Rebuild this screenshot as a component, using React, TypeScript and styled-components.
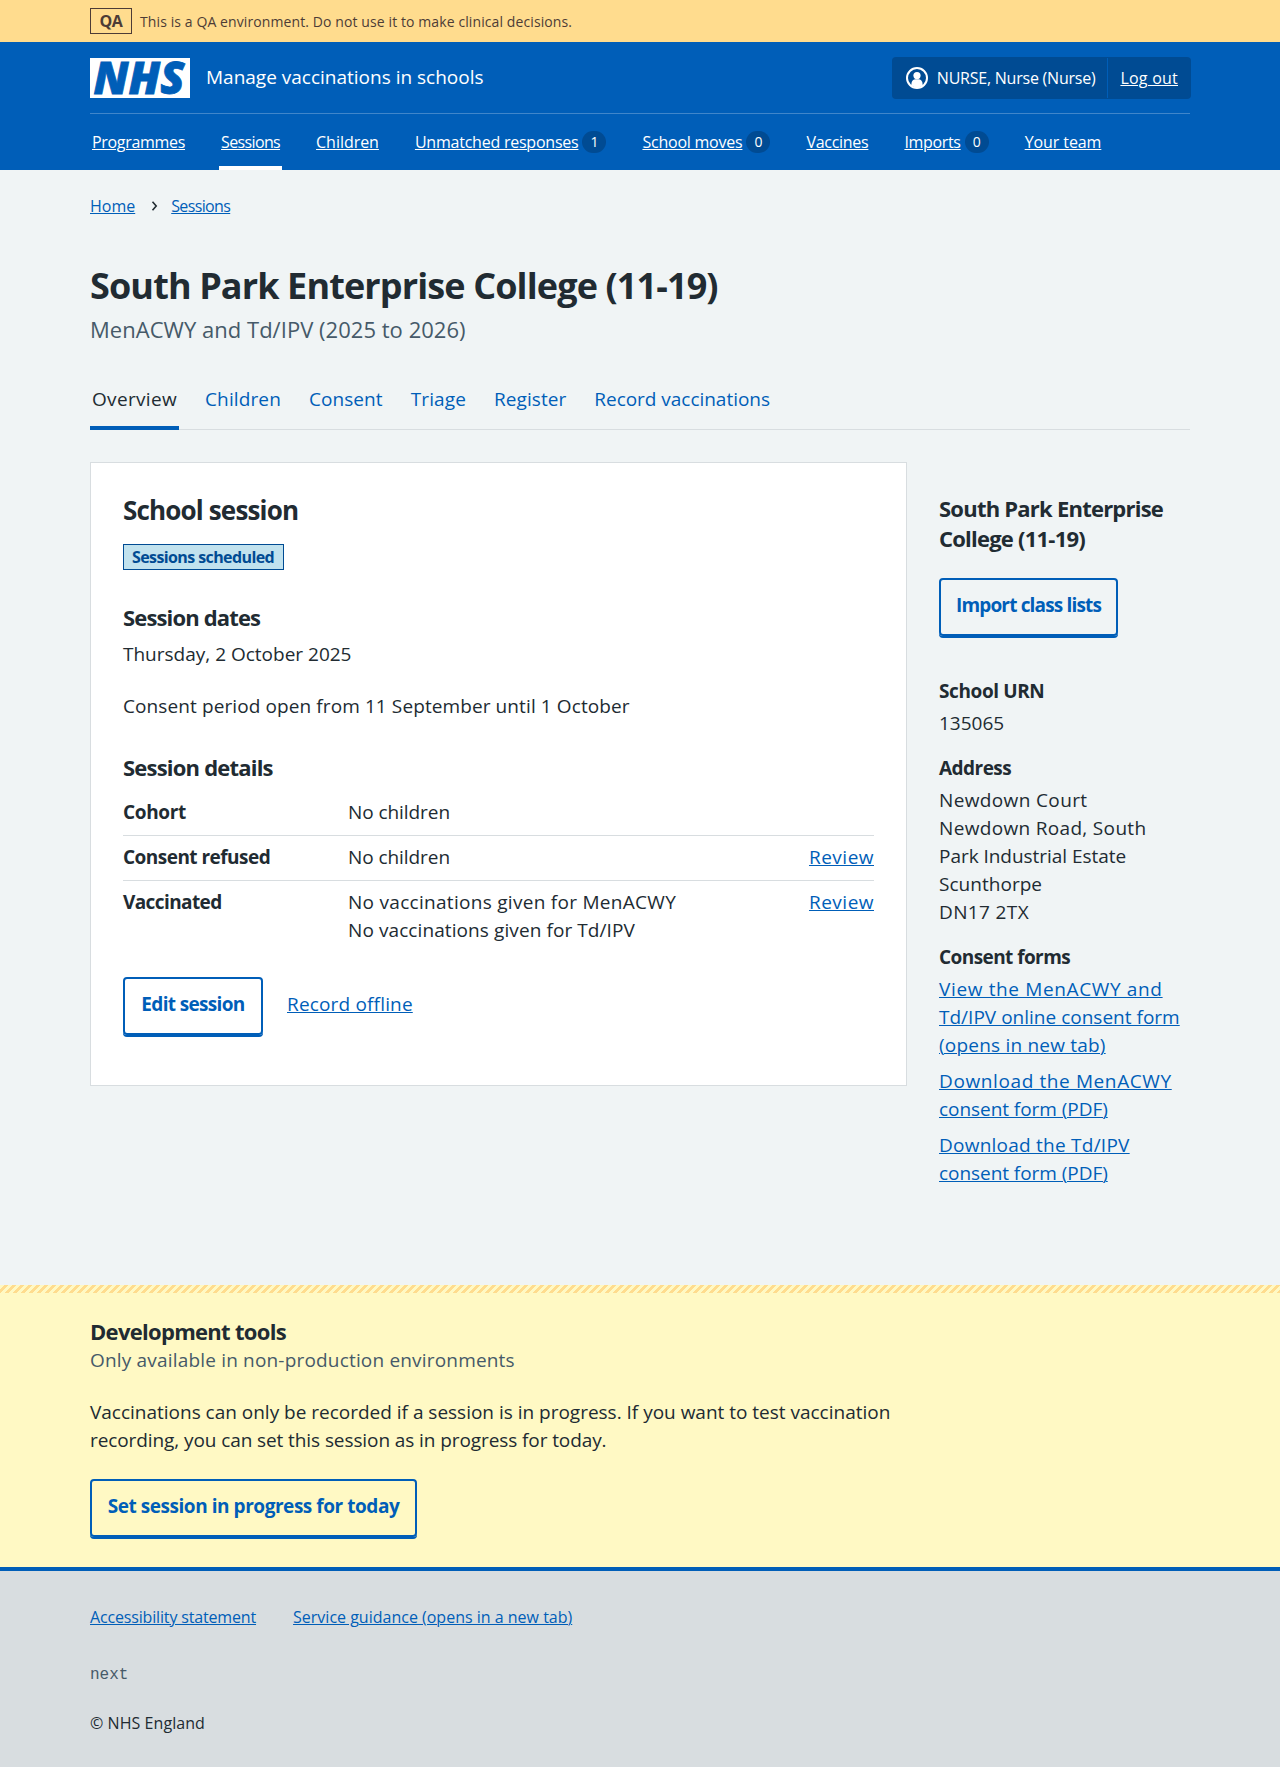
import React from "react";
import styled, { createGlobalStyle, css } from "styled-components";

const blue = "#005eb8";
const darkBlue = "#004b93";
const ink = "#212b32";
const secondary = "#465a69";
const rule = "#d8dde0";

const GlobalStyle = createGlobalStyle`
  *, *::before, *::after { box-sizing: border-box; }
  body {
    margin: 0;
    background: ${rule};
    color: ${ink};
    font-family: "Open Sans", "Noto Sans", sans-serif;
    font-size: 19px;
    line-height: 28px;
  }
  h1, h2, h3, p, ul, dl, dd, dt { margin: 0; padding: 0; }
`;

type Tracked = { $ls?: number };
const tracking = css<Tracked>`
  letter-spacing: ${({ $ls = 0 }) => $ls}px;
`;

const Container = styled.div`
  width: 1100px;
  margin: 0 auto;
`;

const Text = styled.span<Tracked>`
  ${tracking}
  white-space: nowrap;
`;

const Link = styled.a<Tracked>`
  ${tracking}
  color: ${blue};
  white-space: nowrap;
  text-decoration: underline;
  text-decoration-thickness: 1px;
  text-underline-offset: 1px;
`;

/* Environment banner */
const Banner = styled.div`
  background: #ffdc8e;
  color: #4d3c36;
`;
const BannerRow = styled(Container)`
  display: flex;
  align-items: center;
  gap: 8px;
  height: 42px;
`;
const EnvTag = styled.strong`
  display: flex;
  align-items: center;
  justify-content: center;
  width: 42px;
  height: 26px;
  border: 1px solid currentColor;
  font-size: 16px;
  font-weight: 700;
  line-height: 24px;
  letter-spacing: -0.3px;
`;
const BannerText = styled.span`
  font-size: 14px;
  line-height: 21px;
  letter-spacing: 0.1px;
`;

/* Header */
const Header = styled.header`
  background: ${blue};
  color: #fff;
`;
const HeaderMain = styled(Container)`
  display: flex;
  align-items: center;
  height: 72px;
  padding: 15px 0 14px;
  border-bottom: 1px solid rgba(255, 255, 255, 0.25);
`;
const Logo = styled.svg`
  display: block;
  overflow: visible;
  margin-right: 16px;
`;
const ServiceName = styled.span`
  margin-bottom: 2px;
  white-space: nowrap;
`;
const Account = styled.div`
  display: flex;
  height: 42px;
  margin: 0 -1px 0 auto;
  border-radius: 4px;
  background: ${darkBlue};
  font-size: 16px;
  line-height: 24px;
`;
const AccountItem = styled.div<{ $divided?: boolean }>`
  display: flex;
  align-items: center;
  gap: 9px;
  margin: 1px 0;
  padding: ${({ $divided }) => ($divided ? "0 13px 0 12px" : "0 12px 0 14px")};
  border-left: ${({ $divided }) => ($divided ? `1px solid ${blue}` : "0")};
`;
const HeaderLink = styled(Link)`
  color: #fff;
`;
const Nav = styled(Container).attrs({ as: "nav" })`
  display: flex;
  gap: 32px;
  height: 56px;
  font-size: 16px;
  line-height: 24px;
`;
const NavItem = styled.div<{ $active?: boolean }>`
  display: flex;
  align-items: center;
  gap: 4px;
  padding: 0 2px;
  box-shadow: ${({ $active }) => ($active ? "inset 0 -4px 0 #fff" : "none")};
`;
const Count = styled.span`
  display: flex;
  align-items: center;
  justify-content: center;
  width: 24px;
  height: 22px;
  border-radius: 12px;
  background: ${darkBlue};
  font-size: 14px;
  line-height: 22px;
`;

/* Page heading */
const Main = styled.main`
  padding: 24px 0 98px;
  background: #f0f4f5;
`;
const Breadcrumb = styled.nav`
  display: flex;
  align-items: center;
  font-size: 16px;
  line-height: 24px;
`;
const Chevron = styled.svg`
  margin: 0 13px 0 16px;
`;
const PageTitle = styled.h1`
  margin-top: 46px;
  font-size: 36px;
  font-weight: 700;
  line-height: 44px;
  letter-spacing: -0.88px;
`;
const PageCaption = styled.p`
  margin-top: 6px;
  color: ${secondary};
  font-size: 22px;
  line-height: 30px;
  letter-spacing: 0.03px;
`;
const Tabs = styled.nav`
  display: flex;
  gap: 24px;
  margin-top: 41px;
  box-shadow: inset 0 -1px 0 ${rule};
`;
const Tab = styled.a<Tracked & { $active?: boolean }>`
  ${tracking}
  height: 45px;
  padding: 0 2px;
  border-bottom: 4px solid ${({ $active }) => ($active ? blue : "transparent")};
  color: ${({ $active }) => ($active ? ink : blue)};
  white-space: nowrap;
`;

/* Content columns */
const Columns = styled.div`
  display: grid;
  grid-template-columns: 817px 251px;
  gap: 32px;
  align-items: start;
  margin-top: 32px;
`;
const Card = styled.section`
  padding: 30px 32px 50px;
  border: 1px solid ${rule};
  background: #fff;
`;
const CardTitle = styled.h2`
  font-size: 26px;
  font-weight: 700;
  line-height: 34px;
  letter-spacing: -0.84px;
`;
const StatusTag = styled.strong`
  display: flex;
  align-items: center;
  width: 161px;
  height: 26px;
  margin-top: 17px;
  padding-left: 8px;
  border: 1px solid ${darkBlue};
  background: #c1e2ee;
  color: ${darkBlue};
  font-size: 16px;
  font-weight: 700;
  line-height: 24px;
  letter-spacing: -0.6px;
  white-space: nowrap;
`;
const SectionTitle = styled.h3<Tracked & { $top: number }>`
  ${tracking}
  margin-top: ${({ $top }) => $top}px;
  font-size: 22px;
  font-weight: 700;
  line-height: 30px;
`;
const Paragraph = styled.p<Tracked & { $top: number }>`
  ${tracking}
  margin-top: ${({ $top }) => $top}px;
`;
const Summary = styled.dl`
  margin-top: 9px;
`;
const SummaryRow = styled.div`
  display: grid;
  grid-template-columns: 225px 1fr auto;
  padding: 7px 0 9px;
  &:not(:last-child) {
    border-bottom: 1px solid ${rule};
  }
`;
const Key = styled.dt<Tracked>`
  ${tracking}
  font-weight: 700;
`;
const Value = styled.dd`
  display: flex;
  flex-direction: column;
`;
const Actions = styled.div`
  display: flex;
  align-items: center;
  gap: 24px;
  margin-top: 24px;
`;
const ActionLink = styled(Link)`
  margin-bottom: 4px;
`;
const Button = styled.button<Tracked & { $width: number }>`
  ${tracking}
  display: block;
  width: ${({ $width }) => $width}px;
  height: 58px;
  padding: 11px 0 15px;
  border: 2px solid ${blue};
  border-radius: 4px;
  box-shadow: 0 2px 0 ${blue};
  background: transparent;
  color: ${blue};
  font-family: inherit;
  font-size: 19px;
  font-weight: 700;
  line-height: 28px;
  white-space: nowrap;
`;

/* Sidebar */
const Sidebar = styled.aside`
  padding-top: 31px;
`;
const SideButton = styled(Button)`
  margin-top: 25px;
`;
const SideList = styled.dl`
  display: grid;
  gap: 17px;
  margin-top: 41px;
`;
const SideGroup = styled.div`
  display: flex;
  flex-direction: column;
  gap: 4px;
`;
const Lines = styled.dd`
  display: flex;
  flex-direction: column;
  align-items: flex-start;
`;
const LinkList = styled.dd`
  display: grid;
  gap: 8px;
`;

/* Development tools */
const DevTools = styled.section`
  padding-bottom: 30px;
  background: #fff9c4;
  &::before {
    content: "";
    display: block;
    height: 8px;
    background: linear-gradient(
        -45deg,
        #ffdc8e 25%,
        transparent 25% 50%,
        #ffdc8e 50% 75%,
        transparent 75%
      )
      0 0 / 8px 8px;
  }
`;
const DevCaption = styled.p`
  color: ${secondary};
  letter-spacing: 0.18px;
`;
const DevText = styled.p`
  display: flex;
  flex-direction: column;
  margin-top: 24px;
`;
const DevButton = styled(Button)`
  margin-top: 25px;
`;

/* Footer */
const Footer = styled.footer`
  padding: 34px 0 32px;
  border-top: 4px solid ${blue};
  background: ${rule};
  font-size: 16px;
  line-height: 24px;
`;
const FooterLinks = styled.div`
  display: flex;
  gap: 37px;
`;
const Version = styled.p`
  margin-top: 34px;
  color: ${secondary};
  font-family: "Liberation Mono", monospace;
`;
const Copyright = styled.p`
  margin-top: 24px;
  letter-spacing: 0.06px;
`;

const navItems = [
  { label: "Programmes", ls: -0.31 },
  { label: "Sessions", ls: -0.64, active: true },
  { label: "Children", ls: -0.03 },
  { label: "Unmatched responses", ls: -0.23, count: 1 },
  { label: "School moves", ls: -0.23, count: 0 },
  { label: "Vaccines", ls: -0.28 },
  { label: "Imports", ls: -0.33, count: 0 },
  { label: "Your team", ls: -0.09 },
];

const tabs = [
  { label: "Overview", ls: 0.33, active: true },
  { label: "Children", ls: 0.12 },
  { label: "Consent", ls: 0.07 },
  { label: "Triage", ls: 0.14 },
  { label: "Register", ls: 0.06 },
  { label: "Record vaccinations", ls: -0.03 },
];

const address = [
  { line: "Newdown Court", ls: 0.37 },
  { line: "Newdown Road, South", ls: 0.33 },
  { line: "Park Industrial Estate", ls: -0.04 },
  { line: "Scunthorpe", ls: 0.03 },
  { line: "DN17 2TX", ls: 0.37 },
];

const forms = [
  [
    { line: "View the MenACWY and", ls: 0.64 },
    { line: "Td/IPV online consent form", ls: 0.01 },
    { line: "(opens in new tab)", ls: 0.21 },
  ],
  [
    { line: "Download the MenACWY", ls: 0.61 },
    { line: "consent form (PDF)", ls: -0.05 },
  ],
  [
    { line: "Download the Td/IPV", ls: 0.24 },
    { line: "consent form (PDF)", ls: -0.05 },
  ],
];

const NhsLogo = () => (
  <Logo width="100" height="40" viewBox="0 0 100 40" role="img" aria-label="NHS">
    <rect width="100" height="40" fill="#fff" />
    <text
      x="3.5"
      y="36"
      fill={blue}
      stroke={blue}
      strokeWidth="0.8"
      fontFamily="Open Sans"
      fontSize="44.5"
      fontWeight="800"
      fontStyle="italic"
      textLength="91"
      lengthAdjust="spacingAndGlyphs"
    >
      NHS
    </text>
  </Logo>
);

const UserIcon = () => (
  <svg width="22" height="22" viewBox="0 0 22 22" aria-hidden="true">
    <circle cx="11" cy="11" r="10" fill="none" stroke="#fff" strokeWidth="2" />
    <circle cx="11" cy="8.6" r="3.6" fill="#fff" />
    <path
      d="M5.4 18.6v-1.4c0-3 1.9-4.9 4.3-4.9h2.6c2.4 0 4.3 1.9 4.3 4.9v1.4A9.6 9.6 0 0 1 5.4 18.6z"
      fill="#fff"
    />
  </svg>
);

export default function App() {
  return (
    <>
      <GlobalStyle />
      <Banner>
        <BannerRow>
          <EnvTag>QA</EnvTag>
          <BannerText>This is a QA environment. Do not use it to make clinical decisions.</BannerText>
        </BannerRow>
      </Banner>

      <Header>
        <HeaderMain>
          <NhsLogo />
          <ServiceName>Manage vaccinations in schools</ServiceName>
          <Account>
            <AccountItem>
              <UserIcon />
              <Text $ls={-0.23}>NURSE, Nurse (Nurse)</Text>
            </AccountItem>
            <AccountItem $divided>
              <HeaderLink $ls={0.23}>Log out</HeaderLink>
            </AccountItem>
          </Account>
        </HeaderMain>
        <Nav>
          {navItems.map((item) => (
            <NavItem key={item.label} $active={item.active}>
              <HeaderLink $ls={item.ls}>{item.label}</HeaderLink>
              {item.count !== undefined && <Count>{item.count}</Count>}
            </NavItem>
          ))}
        </Nav>
      </Header>

      <Main>
        <Container>
          <Breadcrumb>
            <Link>Home</Link>
            <Chevron width="7" height="10" viewBox="0 0 7 10" aria-hidden="true">
              <path d="M1.5 0.8L5.2 5L1.5 9.2" fill="none" stroke={ink} strokeWidth="1.6" />
            </Chevron>
            <Link $ls={-0.64}>Sessions</Link>
          </Breadcrumb>
          <PageTitle>South Park Enterprise College (11-19)</PageTitle>
          <PageCaption>MenACWY and Td/IPV (2025 to 2026)</PageCaption>
          <Tabs>
            {tabs.map((tab) => (
              <Tab key={tab.label} $ls={tab.ls} $active={tab.active}>
                {tab.label}
              </Tab>
            ))}
          </Tabs>

          <Columns>
            <Card>
              <CardTitle>School session</CardTitle>
              <StatusTag>Sessions scheduled</StatusTag>
              <SectionTitle $top={32} $ls={-0.85}>Session dates</SectionTitle>
              <Paragraph $top={8}>Thursday, 2 October 2025</Paragraph>
              <Paragraph $top={24} $ls={0.1}>Consent period open from 11 September until 1 October</Paragraph>
              <SectionTitle $top={32} $ls={-0.79}>Session details</SectionTitle>
              <Summary>
                <SummaryRow>
                  <Key $ls={-0.35}>Cohort</Key>
                  <Value><Text $ls={-0.07}>No children</Text></Value>
                </SummaryRow>
                <SummaryRow>
                  <Key $ls={-0.53}>Consent refused</Key>
                  <Value><Text $ls={-0.07}>No children</Text></Value>
                  <dd><Link $ls={0.49}>Review</Link></dd>
                </SummaryRow>
                <SummaryRow>
                  <Key $ls={-0.6}>Vaccinated</Key>
                  <Value>
                    <Text $ls={0.29}>No vaccinations given for MenACWY</Text>
                    <Text $ls={0.09}>No vaccinations given for Td/IPV</Text>
                  </Value>
                  <dd><Link $ls={0.49}>Review</Link></dd>
                </SummaryRow>
              </Summary>
              <Actions>
                <Button $width={140} $ls={-0.66}>Edit session</Button>
                <ActionLink $ls={0.17}>Record offline</ActionLink>
              </Actions>
            </Card>

            <Sidebar>
              <SectionTitle $top={0} $ls={-0.77}>South Park Enterprise College (11-19)</SectionTitle>
              <SideButton $width={179} $ls={-0.84}>Import class lists</SideButton>
              <SideList>
                <SideGroup>
                  <Key $ls={-0.4}>School URN</Key>
                  <Lines><Text>135065</Text></Lines>
                </SideGroup>
                <SideGroup>
                  <Key $ls={-0.53}>Address</Key>
                  <Lines>
                    {address.map((a) => (
                      <Text key={a.line} $ls={a.ls}>{a.line}</Text>
                    ))}
                  </Lines>
                </SideGroup>
                <SideGroup>
                  <Key $ls={-0.57}>Consent forms</Key>
                  <LinkList>
                    {forms.map((form) => (
                      <Lines as="div" key={form[0].line}>
                        {form.map((f) => (
                          <Link key={f.line} $ls={f.ls}>{f.line}</Link>
                        ))}
                      </Lines>
                    ))}
                  </LinkList>
                </SideGroup>
              </SideList>
            </Sidebar>
          </Columns>
        </Container>
      </Main>

      <DevTools>
        <Container>
          <SectionTitle $top={23} $ls={-0.7}>Development tools</SectionTitle>
          <DevCaption>Only available in non-production environments</DevCaption>
          <DevText>
            <Text $ls={-0.01}>
              Vaccinations can only be recorded if a session is in progress. If you want to test vaccination
            </Text>
            <Text $ls={-0.09}>recording, you can set this session as in progress for today.</Text>
          </DevText>
          <DevButton $width={327} $ls={-0.45}>Set session in progress for today</DevButton>
        </Container>
      </DevTools>

      <Footer>
        <Container>
          <FooterLinks>
            <Link $ls={-0.16}>Accessibility statement</Link>
            <Link>Service guidance (opens in a new tab)</Link>
          </FooterLinks>
          <Version>next</Version>
          <Copyright>© NHS England</Copyright>
        </Container>
      </Footer>
    </>
  );
}
